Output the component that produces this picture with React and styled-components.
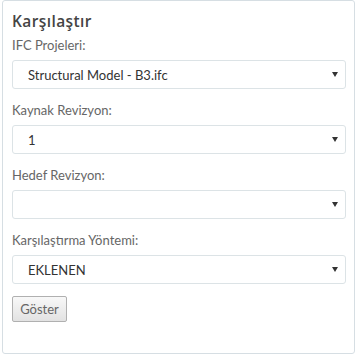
import React from "react";
import styled, { createGlobalStyle } from "styled-components";

const Global = createGlobalStyle`
  html, body { margin: 0; padding: 0; background: #ffffff; }
  body { font-family: Lato, "Open Sans", sans-serif; }
`;

const Panel = styled.div`
  box-sizing: border-box;
  margin-left: 2px;
  width: 353px;
  height: 354px;
  border: 1px solid #d6dee3;
  border-radius: 3px;
  background: #fff;
  padding: 9px 9px 0 9px;
`;

const Title = styled.h3`
  margin: 0 0 4px 0;
  font-family: "Open Sans", Lato, sans-serif;
  font-size: 15.5px;
  line-height: 22px;
  font-weight: 600;
  letter-spacing: 0.4px;
  color: #444;
`;

const Field = styled.div`
  margin-bottom: 12px;
`;

const Label = styled.label`
  display: block;
  font-size: 13px;
  line-height: 18px;
  color: #666;
  margin-bottom: 6px;
`;

const Combo = styled.button`
  box-sizing: border-box;
  display: flex;
  align-items: center;
  justify-content: space-between;
  width: 334px;
  height: 29px;
  border: 1px solid #dce3e6;
  border-radius: 3px;
  background: #fff;
  padding: 0 7px 0 15px;
  margin: 0;
  font-family: inherit;
  font-size: 13px;
  color: #333;
  text-align: left;
  outline: none;
`;

const Value = styled.span`
  white-space: nowrap;
`;

const Caret = styled.svg`
  flex: none;
  display: block;
`;

const Button = styled.button`
  box-sizing: border-box;
  display: block;
  width: 55px;
  height: 26px;
  margin-top: 4px;
  border: 1px solid #b0b0b0;
  border-radius: 2px;
  background: linear-gradient(#f8f8f8, #e2e2e2);
  font-family: inherit;
  font-size: 13px;
  color: #666;
  padding: 0;
`;

function Dropdown({ value }) {
  return (
    <Combo type="button" role="combobox" aria-expanded="false">
      <Value>{value}</Value>
      <Caret width="6" height="5" viewBox="0 0 6 5">
        <polygon points="0,0 6,0 3,5" fill="#333" />
      </Caret>
    </Combo>
  );
}

export default function App() {
  const fields = [
    ["IFC Projeleri:", "Structural Model - B3.ifc"],
    ["Kaynak Revizyon:", "1"],
    ["Hedef Revizyon:", ""],
    ["Karşılaştırma Yöntemi:", "EKLENEN"],
  ];
  return (
    <>
      <Global />
      <Panel>
        <Title>Karşılaştır</Title>
        {fields.map(([l, v]) => (
          <Field key={l}>
            <Label>{l}</Label>
            <Dropdown value={v} />
          </Field>
        ))}
        <Button>Göster</Button>
      </Panel>
    </>
  );
}
